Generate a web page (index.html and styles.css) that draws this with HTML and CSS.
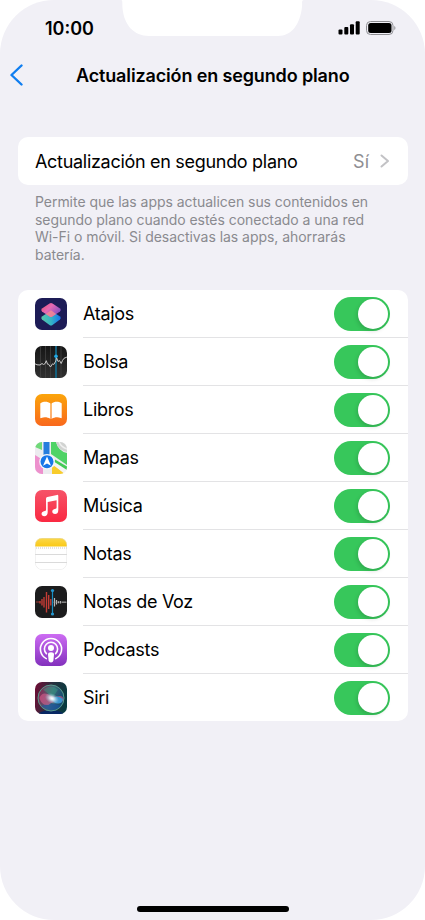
FILE: index.html
```html
<!DOCTYPE html>
<html lang="es">

<head>
    <meta charset="UTF-8">
    <meta name="viewport" content="width=device-width, initial-scale=1.0">
    <title>Actualización en segundo plano</title>
    <link rel="stylesheet" href="styles.css">
</head>

<body>
    <div class="phone">
        <svg class="notch" width="183" height="37" viewBox="0 0 183 37">
            <path d="M0 0H183C180 0 181.500 3 181 7C179 24 171 36 157 36H28C13 36 3 25 1.500 8C1 3 2 0 0 0Z" fill="#fff" />
        </svg>

        <!-- Status bar -->
        <div class="status">
            <span class="time">10:00</span>
            <svg width="58" height="16" viewBox="0 0 58 16">
                <rect x="0.500" y="9.500" width="4" height="5" rx="1" />
                <rect x="6.300" y="7" width="4" height="7.500" rx="1" />
                <rect x="12" y="4.300" width="4" height="10.200" rx="1" />
                <rect x="17.700" y="1.300" width="4" height="13.200" rx="1" />
                <rect x="28.500" y="1.500" width="26.500" height="13" rx="4" fill="none" stroke="#8e8e92" />
                <rect x="30.200" y="3" width="23.300" height="10" rx="2.500" />
                <path d="M56.300 6v4c1.500-.6 1.500-3.400 0-4z" fill="#8e8e92" />
            </svg>
        </div>

        <!-- Header -->
        <div class="header">
            <svg class="back" width="14" height="22" viewBox="0 0 14 22">
                <path d="M11.500 1.500L1.500 11l10 9.500" fill="none" stroke="#107ef0" stroke-width="2.400" stroke-linecap="round" stroke-linejoin="round" />
            </svg>
            <h1>Actualización en segundo plano</h1>
        </div>

        <div class="card option">
            <span class="option-name">Actualización en segundo plano</span>
            <span class="value">Sí</span>
            <svg width="10" height="14" viewBox="0 0 10 14">
                <path d="M1.500 1.500L8 7l-6.500 5.500" fill="none" stroke="#c2c2c5" stroke-width="2" stroke-linecap="round" stroke-linejoin="round" />
            </svg>
        </div>
        <p class="note">
            Permite que las apps actualicen sus contenidos en<br>
            segundo plano cuando estés conectado a una red<br>
            Wi-Fi o móvil. Si desactivas las apps, ahorrarás<br>
            batería.
        </p>

        <!-- App list -->
        <div class="card list">
            <div class="row">
                <svg class="icon" viewBox="0 0 32 32">
                    <defs>
                        <linearGradient id="sc1" x1="0" y1="0" x2="1" y2="0.700">
                            <stop offset="0" stop-color="#f0506a" />
                            <stop offset="0.450" stop-color="#e66ab4" />
                            <stop offset="1" stop-color="#7b4ac4" />
                        </linearGradient>
                        <linearGradient id="sc2" x1="0" y1="0" x2="1" y2="0">
                            <stop offset="0" stop-color="#5cc6a8" />
                            <stop offset="0.500" stop-color="#35b5c4" />
                            <stop offset="1" stop-color="#1673f0" />
                        </linearGradient>
                    </defs>
                    <rect width="32" height="32" fill="#1d1c56" />
                    <path d="M7 18.500l7.500-5q1.500-1 3 0l7.500 5q1.600 1.500 0 3L17.500 27q-1.500 1-3 0L7 21.500q-1.600-1.500 0-3z" fill="url(#sc2)" />
                    <path d="M7 10.500L14.500 5.500q1.500-1 3 0L25 10.500q1.600 1.500 0 3L17.500 18.600q-1.500 1-3 0L7 13.500q-1.600-1.500 0-3z" fill="url(#sc1)" />
                    <path d="M16 12.200l5.200 3.800-3.700 2.600q-1.500 1-3 0L10.800 16z" fill="#f68c91" opacity=".8" />
                </svg>
                <span class="name">Atajos</span>
                <span class="switch"></span>
            </div>
            <div class="row">
                <svg class="icon" viewBox="0 0 32 32">
                    <defs>
                        <linearGradient id="st" x1="0" y1="0" x2="0" y2="1">
                            <stop offset="0" stop-color="#161616" />
                            <stop offset="1" stop-color="#303030" />
                        </linearGradient>
                    </defs>
                    <rect width="32" height="32" fill="url(#st)" />
                    <path d="M5.500 0v32M10.500 0v32M15.500 0v32M26 0v32" stroke="#414141" stroke-width=".8" />
                    <path d="M21 0v32" stroke="#155f7c" stroke-width="2" />
                    <path d="M0 17.800l2 1 3 .2 2-1.500 1.500 1 1.500-.8 1.300-3 1.200 3.500 1 0 2 2.800 2-3.200 1.300.7 2-3.500.7-3.500 1.500 4 1.500-1 1.700 3 1.300-3 1.500-2.200L32 11" fill="none" stroke="#c8c8c8" stroke-width="1" stroke-linejoin="round" />
                    <circle cx="21" cy="10.300" r="1.800" fill="#20a9e5" />
                </svg>
                <span class="name">Bolsa</span>
                <span class="switch"></span>
            </div>
            <div class="row">
                <svg class="icon" viewBox="0 0 32 32">
                    <defs>
                        <linearGradient id="bk" x1="0" y1="0" x2="0" y2="1">
                            <stop offset="0" stop-color="#fba50b" />
                            <stop offset="1" stop-color="#f9681d" />
                        </linearGradient>
                    </defs>
                    <rect width="32" height="32" fill="url(#bk)" />
                    <path d="M15.400 9.500C13 7.300 8.500 7.200 5.800 9q-.5.300-.5.900V23.500q0 1 1 .6c2.800-1.200 6.200-.9 9.100.8zM16.600 9.500C19 7.300 23.500 7.200 26.200 9q.5.300.5.900V23.500q0 1-1 .6c-2.800-1.200-6.200-.9-9.100.8z" fill="#fff" />
                </svg>
                <span class="name">Libros</span>
                <span class="switch"></span>
            </div>
            <div class="row">
                <svg class="icon" viewBox="0 0 32 32">
                    <rect width="32" height="32" fill="#ececef" />
                    <path d="M0 0h7v8L0 5z" fill="#70d979" />
                    <path d="M0 13l8 5v14H0z" fill="#ed91cd" />
                    <path d="M16 0h5Q23 9 32 11v12L16 12z" fill="#4fd366" />
                    <path d="M17 32V25l3-1 10 8z" fill="#f8cc2b" />
                    <path d="M18 19l14 9v4h-2L17 22z" fill="#f4f4f6" />
                    <path d="M20 17.500l12 7v3.500L19.500 20z" fill="#43ca56" />
                    <path d="M21 0q2 8 11 10V0z" fill="#d1d3d1" />
                    <path d="M24 0q2 5 8 7" fill="none" stroke="#f0f0f0" stroke-width="1.500" />
                    <path d="M8.500 0h6v16h-6z" fill="#267ddd" />
                    <circle cx="12" cy="19.700" r="7.800" fill="#f5f6fa" />
                    <circle cx="12" cy="19.700" r="6.500" fill="#1776e8" />
                    <path d="M12 14.500l4 9.300-4-2.200-4 2.200z" fill="#fff" />
                </svg>
                <span class="name">Mapas</span>
                <span class="switch"></span>
            </div>
            <div class="row">
                <svg class="icon" viewBox="0 0 32 32">
                    <defs>
                        <linearGradient id="mu" x1="0" y1="0" x2="0" y2="1">
                            <stop offset="0" stop-color="#f65368" />
                            <stop offset="1" stop-color="#fa2942" />
                        </linearGradient>
                    </defs>
                    <rect width="32" height="32" fill="url(#mu)" />
                    <path d="M11 8.700q0-1.500 1.400-1.800L22 4.900q1.300-.2 1.300 1.100V20c0 3-1.500 4-3.200 4-3.600 0-3.800-4.300-.5-5 1.600-.4 2-.4 2-2v-6.700l-8.900 1.800V22c0 3-1.600 4.200-3.300 4.200-3.600 0-3.800-4.300-.5-5 1.600-.4 2.200-.5 2.200-2z" fill="#fff" />
                </svg>
                <span class="name">Música</span>
                <span class="switch"></span>
            </div>
            <div class="row">
                <svg class="icon" viewBox="0 0 32 32">
                    <defs>
                        <linearGradient id="no" x1="0" y1="0" x2="0" y2="1">
                            <stop offset="0" stop-color="#fbd84b" />
                            <stop offset="1" stop-color="#fac917" />
                        </linearGradient>
                    </defs>
                    <rect width="32" height="32" fill="#fff" />
                    <rect width="32" height="8.500" fill="url(#no)" />
                    <path d="M1 10h31" stroke="#c6c6c6" stroke-width="1" stroke-dasharray="1 1" />
                    <path d="M0 16.500h32M0 24.500h32" stroke="#dadada" />
                    <rect x=".25" y=".25" width="31.500" height="31.500" rx="6.800" fill="none" stroke="#ddd" stroke-width=".5" />
                </svg>
                <span class="name">Notas</span>
                <span class="switch"></span>
            </div>
            <div class="row">
                <svg class="icon" viewBox="0 0 32 32">
                    <rect width="32" height="32" fill="#1c1c1d" />
                    <path d="M1 16h3.500" stroke="#a23a34" />
                    <path d="M5 15v2.500M7 13v6.500M9 11v10.500M11.500 6v20.500M13.700 9v14M15.800 13v6.500" stroke="#c43c35" stroke-width="1.400" />
                    <path d="M19.500 12v8.500M21.500 14v4.500M23.500 15.300v2M25.500 15v2.500M28 15.500v1.500M30 15.500v1.500" stroke="#b9b9b9" stroke-width="1.200" />
                    <path d="M18 16.200h14" stroke="#999" stroke-width=".5" />
                    <path d="M17.500 4.500v24" stroke="#168ec3" stroke-width="1.200" />
                    <circle cx="17.500" cy="4.500" r="1.600" fill="#2598d0" />
                    <circle cx="17.500" cy="28" r="1.600" fill="#2598d0" />
                </svg>
                <span class="name">Notas de Voz</span>
                <span class="switch"></span>
            </div>
            <div class="row">
                <svg class="icon" viewBox="0 0 32 32">
                    <defs>
                        <linearGradient id="po" x1="0" y1="0" x2="0" y2="1">
                            <stop offset="0" stop-color="#cd6cf3" />
                            <stop offset="1" stop-color="#8331bd" />
                        </linearGradient>
                    </defs>
                    <rect width="32" height="32" fill="url(#po)" />
                    <g fill="none" stroke="#fff" stroke-width="1.600" stroke-linecap="round">
                        <path d="M11.300 24.600A10.600 10.600 0 1 1 20.700 24.600" />
                        <path d="M11.400 19.600A6.600 6.600 0 1 1 20.600 19.600" />
                    </g>
                    <circle cx="16" cy="14" r="3" fill="#fff" />
                    <path d="M13 20.500q0-2.300 3-2.300t3 2.300l-.6 6q-.3 1.900-2.400 1.900t-2.400-1.900z" fill="#fff" />
                </svg>
                <span class="name">Podcasts</span>
                <span class="switch"></span>
            </div>
            <div class="row">
                <svg class="icon" viewBox="0 0 32 32">
                    <defs>
                        <linearGradient id="si1" x1="0" y1="0.300" x2="1" y2="0.500">
                            <stop offset="0" stop-color="#6b0f35" />
                            <stop offset="0.500" stop-color="#26313f" />
                            <stop offset="1" stop-color="#073b40" />
                        </linearGradient>
                        <linearGradient id="si2" x1="0" y1="0.300" x2="1" y2="0.600">
                            <stop offset="0" stop-color="#8d2450" />
                            <stop offset="0.500" stop-color="#3f6877" />
                            <stop offset="1" stop-color="#0d4770" />
                        </linearGradient>
                        <radialGradient id="si3">
                            <stop offset="0" stop-color="#fff" />
                            <stop offset="0.300" stop-color="#e8f5fa" stop-opacity="0.850" />
                            <stop offset="1" stop-color="#9ac9dd" stop-opacity="0" />
                        </radialGradient>
                    </defs>
                    <rect width="32" height="32" fill="url(#si1)" />
                    <path d="M2 32q14-8 28 0z" fill="#082863" />
                    <circle cx="16" cy="16" r="13" fill="url(#si2)" stroke="#5a9c8d" stroke-width="1" />
                    <path d="M8 7.500q8-6 15 0l-5 8z" fill="#35ac86" opacity=".4" />
                    <path d="M6 24q10-5 20 0-9 8-20 0z" fill="#1a55b0" opacity=".5" />
                    <path d="M4.500 16q2-6 8-4 5 3 8 3 7-3 8 2-1 5-7 4-4-2-8 2-7 1-9-7z" fill="#e05a8c" opacity=".6" />
                    <path d="M16 17q6-5 12 0-1 6-8 4z" fill="#329bd6" opacity=".9" />
                    <ellipse cx="17" cy="16.500" rx="7.500" ry="5" transform="rotate(25 17 16.500)" fill="url(#si3)" />
                </svg>
                <span class="name">Siri</span>
                <span class="switch"></span>
            </div>
        </div>

        <div class="home"></div>
    </div>
</body>

</html>
```
FILE: styles.css
```css
* {
    padding: 0;
    margin: 0;
    box-sizing: border-box;
}

body {
    background: #fff;
    font-family: 'Inter', sans-serif;
    color: #000;
}

.phone {
    position: relative;
    width: 425px;
    height: 920px;
    background-color: #f1f0f6;
    border-radius: 54px;
    display: flex;
    flex-direction: column;
    overflow: hidden;
}

.notch {
    position: absolute;
    top: 0;
    left: 121px;
}

.status {
    height: 56px;
    padding: 0 29px 0 45px;
    display: flex;
    align-items: center;
    justify-content: space-between;
}

.time {
    font-size: 18px;
    font-weight: 600;
}

.header {
    height: 38px;
    display: flex;
    align-items: center;
    padding-left: 10px;
}

.header h1 {
    margin-left: 52px;
    font-size: 18px;
    font-weight: 600;
    letter-spacing: -0.140px;
    white-space: nowrap;
}

.card {
    margin: 0 17.500px;
    background-color: #fff;
    border-radius: 10px;
    overflow: hidden;
}

.option {
    height: 48px;
    margin-top: 43px;
    padding: 0 17.500px;
    display: flex;
    align-items: center;
    flex-shrink: 0;
}

.option-name {
    font-size: 18px;
    letter-spacing: -0.300px;
    white-space: nowrap;
}

.value {
    margin-left: auto;
    margin-right: 11px;
    font-size: 18px;
    color: #8e8e92;
}

.note {
    height: 70px;
    margin: 8px 35px 0;
    font-size: 14px;
    line-height: 17.500px;
    letter-spacing: -0.040px;
    color: #8a8a8f;
    white-space: nowrap;
}

.list {
    margin-top: 27px;
    height: 431px;
    flex-shrink: 0;
}

.row {
    position: relative;
    height: 48px;
    padding: 0 17.500px 1px;
    display: flex;
    align-items: center;
}

.row + .row::before {
    content: "";
    position: absolute;
    top: -1px;
    left: 65.500px;
    right: 0;
    height: 1px;
    background-color: #e3e3e5;
}

.icon {
    width: 32px;
    height: 32px;
    border-radius: 7px;
}

.name {
    margin-left: 16px;
    font-size: 18px;
    letter-spacing: -0.300px;
}

.switch {
    width: 56px;
    height: 34px;
    margin-left: auto;
    padding: 2px;
    border-radius: 17px;
    background-color: #37c75b;
    display: flex;
    justify-content: flex-end;
}

.switch::after {
    content: "";
    width: 30px;
    height: 30px;
    border-radius: 50%;
    background-color: #fff;
    box-shadow: -1px 2px 4px rgba(0, 0, 0, 0.15);
}

.home {
    width: 152px;
    height: 6px;
    margin: auto auto 8.500px;
    border-radius: 3px;
    background-color: #000;
}
```
